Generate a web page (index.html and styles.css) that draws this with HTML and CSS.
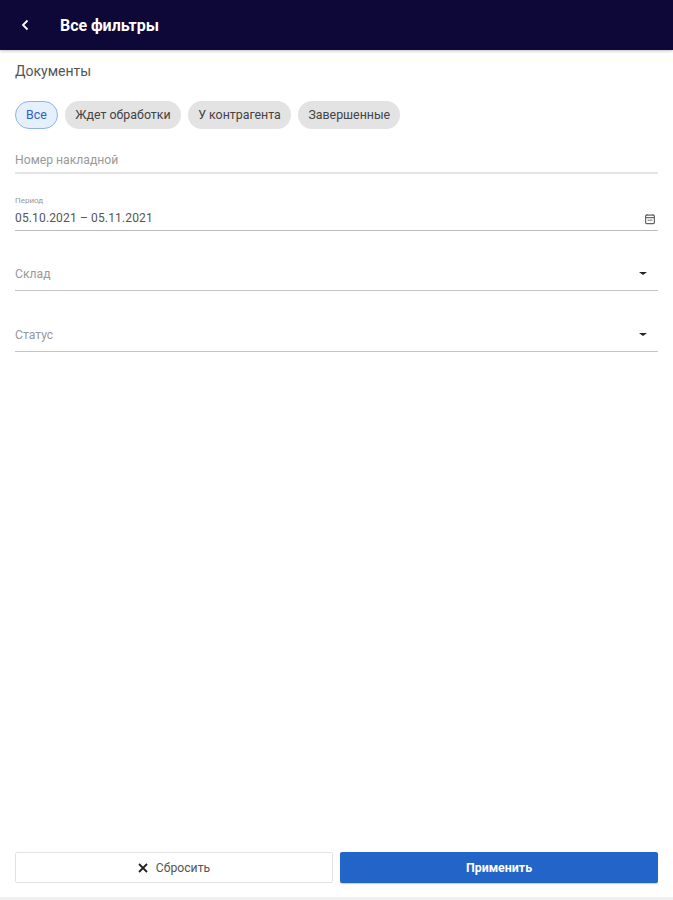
FILE: index.html
```html
<!DOCTYPE html>
<html lang="ru">
<head>
<meta charset="utf-8">
<title>Все фильтры</title>
<link rel="stylesheet" href="styles.css">
</head>
<body>
<div class="page">
  <header class="topbar">
    <svg class="back" width="10" height="14" viewBox="0 0 10 14"><path d="M7.5 2.5 3 7l4.5 4.5" fill="none" stroke="#fff" stroke-width="1.8"/></svg>
    <h1 class="title">Все фильтры</h1>
  </header>
  <main class="content">
    <div class="section">Документы</div>
    <div class="chips">
      <span class="chip chip-active">Все</span>
      <span class="chip">Ждет обработки</span>
      <span class="chip">У контрагента</span>
      <span class="chip">Завершенные</span>
    </div>
    <div class="field field-number"><span class="placeholder">Номер накладной</span></div>
    <div class="field field-period">
      <div class="period-body">
        <span class="float-label">Период</span>
        <span class="value">05.10.2021 – 05.11.2021</span>
      </div>
      <svg class="cal" width="12" height="12" viewBox="0 0 12 12"><path d="M3 1v1.2M9 1v1.2" stroke="#666" stroke-width="1.2"/><rect x="1.6" y="2.2" width="8.8" height="8.4" rx="1" fill="none" stroke="#666" stroke-width="1.2"/><path d="M2 4.6h8" stroke="#666" stroke-width="1.2"/><path d="M3.6 6.6h4.8v1.2H3.6z" fill="#888"/></svg>
    </div>
    <div class="field field-select field-store"><span class="placeholder">Склад</span><span class="caret"></span></div>
    <div class="field field-select field-status"><span class="placeholder">Статус</span><span class="caret"></span></div>
  </main>
  <footer class="actions">
    <button class="btn btn-reset" type="button">
      <svg width="10" height="10" viewBox="0 0 10 10"><path d="M1 1l8 8M9 1 1 9" stroke="#222" stroke-width="1.8"/></svg>
      <span>Сбросить</span>
    </button>
    <button class="btn btn-apply" type="button">Применить</button>
  </footer>
</div>
</body>
</html>
```
FILE: styles.css
```css
* { box-sizing: border-box; }
html, body { margin: 0; height: 100%; }
body { font-family: Roboto, "Liberation Sans", sans-serif; color: #444; background: #fff; }
.page { height: 900px; display: flex; flex-direction: column; border-bottom: 3px solid #f0f0f0; }
.topbar { height: 50px; flex: none; background: #0d0838; display: flex; align-items: center; padding-left: 20px; box-shadow: 0 1px 3px rgba(0,0,0,.25); }
.back { display: block; }
.title { margin: 0 0 0 30px; font-size: 16px; font-weight: 700; color: #fff; letter-spacing: -0.05px; }
.content { flex: 1; padding: 0 15px 0 15px; }
.section { margin-top: 13px; font-size: 14px; line-height: 17px; color: #555; }
.chips { display: flex; gap: 7.5px; margin-top: 21px; }
.chip { height: 28px; padding: 0 10px; border-radius: 14px; background: #e3e3e3; font-size: 12.4px; line-height: 28px; color: #444; white-space: nowrap; }
.chip-active { background: #e6effc; border: 1px solid #8fb2e8; color: #2b62c4; line-height: 26px; padding: 0 10px; }
.field { display: flex; align-items: flex-end; justify-content: space-between; border-bottom: 1px solid #c4c4c4; }
.field-number { margin-top: 19px; height: 26px; padding-bottom: 4px; border-bottom: 2px solid #e4e4e4; }
.placeholder { font-size: 12.2px; line-height: 16px; color: #999; }
.field-period { margin-top: 20px; height: 37px; padding-bottom: 4px; border-bottom-color: #bbb; }
.period-body { display: flex; flex-direction: column; }
.float-label { font-size: 8px; line-height: 10px; color: #999; margin-bottom: 4px; }
.value { font-size: 12px; line-height: 16px; color: #555; letter-spacing: 0.15px; }
.cal { margin: 0 2px 1px 0; }
.field-select { height: 38px; padding-bottom: 8px; align-items: center; }
.field-store { margin-top: 22px; }
.field-status { margin-top: 23px; }
.field-select .placeholder { margin-top: 12px; }
.caret { width: 0; height: 0; margin: 12px 11px 0 0; border-left: 4px solid transparent; border-right: 4px solid transparent; border-top: 3px solid #222; }
.actions { flex: none; display: flex; gap: 7px; padding: 0 15px 14px 15px; }
.btn { height: 31px; font-family: inherit; font-size: 12.2px; border-radius: 2px; display: flex; align-items: center; justify-content: center; }
.btn-reset { flex: 0 0 318px; background: #fff; border: 1px solid #e2e2e2; color: #555; gap: 8px; }
.btn-apply { flex: 1; background: #2264c8; border: 0; color: #fff; font-size: 12.4px; font-weight: 700; box-shadow: 0 1px 1px rgba(0,0,0,.2); }
```
